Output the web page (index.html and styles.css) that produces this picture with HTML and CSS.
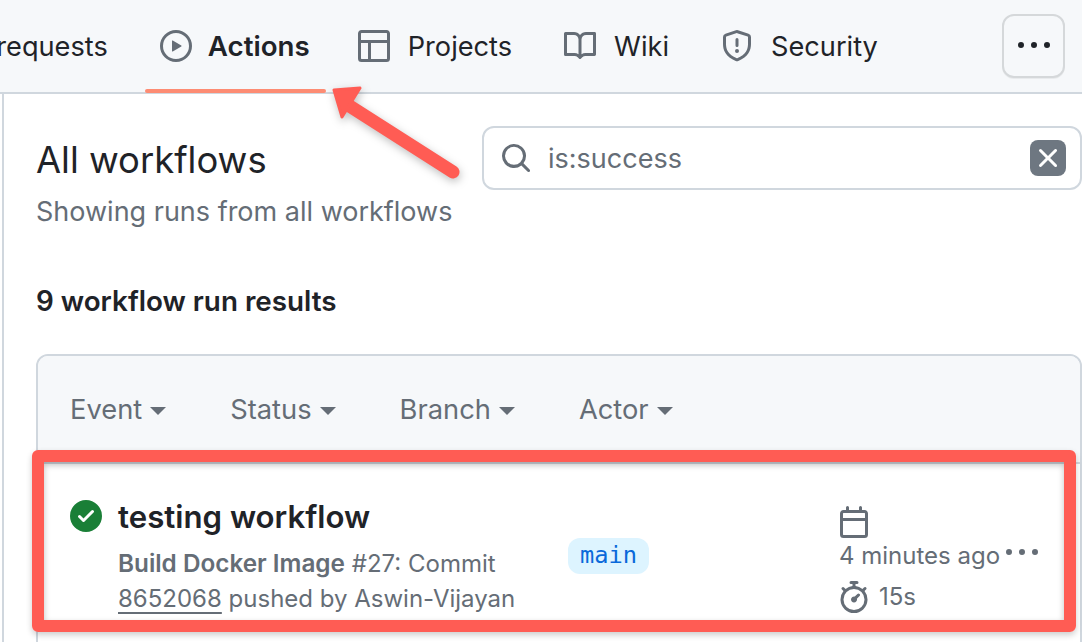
FILE: index.html
```html
<!DOCTYPE html>
<html lang="en">
<head>
    <meta charset="UTF-8">
    <title>Actions</title>
    <link rel="stylesheet" href="styles.css">
</head>
<body>
    <header class="repo-nav">
        <nav class="tabs">
            <a class="tab tab-first">Pull requests</a>
            <a class="tab active">
                <svg class="icon" viewBox="0 0 16 16"><path d="M8 0a8 8 0 1 1 0 16A8 8 0 0 1 8 0ZM1.5 8a6.5 6.5 0 1 0 13 0 6.5 6.5 0 0 0-13 0Zm4.879-2.773 4.264 2.559a.25.25 0 0 1 0 .428l-4.264 2.559A.25.25 0 0 1 6 10.559V5.442a.25.25 0 0 1 .379-.215Z"/></svg>
                Actions
            </a>
            <a class="tab">
                <svg class="icon" viewBox="0 0 16 16"><path d="M0 1.75C0 .784.784 0 1.75 0h12.5C15.216 0 16 .784 16 1.75v12.5A1.75 1.75 0 0 1 14.25 16H1.75A1.75 1.75 0 0 1 0 14.25ZM6.5 6.5v8h7.75a.25.25 0 0 0 .25-.25V6.5Zm8-1.5V1.75a.25.25 0 0 0-.25-.25H1.75a.25.25 0 0 0-.25.25V5Zm-13 1.5v7.75c0 .138.112.25.25.25H5v-8Z"/></svg>
                Projects
            </a>
            <a class="tab">
                <svg class="icon" viewBox="0 0 16 16"><path d="M0 1.75A.75.75 0 0 1 .75 1h4.253c1.227 0 2.317.59 3 1.501A3.743 3.743 0 0 1 11.006 1h4.245a.75.75 0 0 1 .75.75v10.5a.75.75 0 0 1-.75.75h-4.507a2.25 2.25 0 0 0-1.591.659l-.622.621a.75.75 0 0 1-1.06 0l-.622-.621A2.25 2.25 0 0 0 5.258 13H.75a.75.75 0 0 1-.75-.75Zm7.251 10.324.004-5.073-.002-2.253A2.25 2.25 0 0 0 5.003 2.5H1.5v9h3.757a3.75 3.75 0 0 1 1.994.574ZM8.755 4.75l-.004 7.322a3.752 3.752 0 0 1 1.992-.572H14.5v-9h-3.495a2.25 2.25 0 0 0-2.25 2.25Z"/></svg>
                Wiki
            </a>
            <a class="tab">
                <svg class="icon" viewBox="0 0 16 16"><path d="M7.467.133a1.748 1.748 0 0 1 1.066 0l5.25 1.68A1.75 1.75 0 0 1 15 3.48V7c0 1.566-.32 3.182-1.303 4.682-.983 1.498-2.585 2.813-5.032 3.855a1.697 1.697 0 0 1-1.33 0c-2.447-1.042-4.049-2.357-5.032-3.855C1.32 10.182 1 8.566 1 7V3.48a1.75 1.75 0 0 1 1.217-1.667Zm.61 1.429a.25.25 0 0 0-.153 0l-5.25 1.68a.25.25 0 0 0-.174.238V7c0 1.358.275 2.666 1.057 3.86.784 1.194 2.121 2.34 4.366 3.297a.196.196 0 0 0 .154 0c2.245-.956 3.582-2.104 4.366-3.298C13.225 9.666 13.5 8.36 13.5 7V3.48a.251.251 0 0 0-.174-.237l-5.25-1.68ZM8.75 4.75v3a.75.75 0 0 1-1.5 0v-3a.75.75 0 0 1 1.5 0ZM9 10.5a1 1 0 1 1-2 0 1 1 0 0 1 2 0Z"/></svg>
                Security
            </a>
        </nav>
        <button class="more-btn">
            <svg class="icon" viewBox="0 0 16 16"><path d="M8 9a1.5 1.5 0 1 0 0-3 1.5 1.5 0 0 0 0 3ZM1.5 9a1.5 1.5 0 1 0 0-3 1.5 1.5 0 0 0 0 3Zm13 0a1.5 1.5 0 1 0 0-3 1.5 1.5 0 0 0 0 3Z"/></svg>
        </button>
    </header>

    <main class="content">
        <div class="top">
            <div class="heading">
                <h1>All workflows</h1>
                <p>Showing runs from all workflows</p>
            </div>
            <div class="search">
                <svg class="icon" viewBox="0 0 16 16"><path d="M10.68 11.74a6 6 0 0 1-7.922-8.982 6 6 0 0 1 8.982 7.922l3.04 3.04a.749.749 0 0 1-.326 1.275.749.749 0 0 1-.734-.215ZM11.5 7a4.499 4.499 0 1 0-8.997 0A4.499 4.499 0 0 0 11.5 7Z"/></svg>
                <span class="query">is:success</span>
                <span class="clear">
                    <svg class="icon" viewBox="0 0 16 16"><path d="M3.72 3.72a.75.75 0 0 1 1.06 0L8 6.94l3.22-3.22a.749.749 0 0 1 1.275.326.749.749 0 0 1-.215.734L9.06 8l3.22 3.22a.749.749 0 0 1-.326 1.275.749.749 0 0 1-.734-.215L8 9.06l-3.22 3.22a.751.751 0 0 1-1.042-.018.751.751 0 0 1-.018-1.042L6.94 8 3.72 4.78a.75.75 0 0 1 0-1.06Z"/></svg>
                </span>
            </div>
        </div>

        <h2 class="results">9 workflow run results</h2>

        <section class="box">
            <div class="filters">
                <span class="filter">Event<i class="caret"></i></span>
                <span class="filter">Status<i class="caret"></i></span>
                <span class="filter">Branch<i class="caret"></i></span>
                <span class="filter">Actor<i class="caret"></i></span>
            </div>
            <div class="run">
                <svg class="icon status" viewBox="0 0 16 16"><path d="M8 16A8 8 0 1 1 8 0a8 8 0 0 1 0 16Zm3.78-9.72a.751.751 0 0 0-.018-1.042.751.751 0 0 0-1.042-.018L6.75 9.19 5.28 7.72a.751.751 0 0 0-1.042.018.751.751 0 0 0-.018 1.042l2 2a.75.75 0 0 0 1.06 0Z"/></svg>
                <div class="run-main">
                    <div class="run-title">testing workflow</div>
                    <div class="run-sub"><b>Build Docker Image</b> #27: Commit<br><u>8652068</u> pushed by Aswin-Vijayan</div>
                </div>
                <div class="branch-col"><span class="branch">main</span></div>
                <div class="run-meta">
                    <svg class="icon" viewBox="0 0 16 16"><path d="M4.75 0a.75.75 0 0 1 .75.75V2h5V.75a.75.75 0 0 1 1.5 0V2h1.25c.966 0 1.75.784 1.75 1.75v10.5A1.75 1.75 0 0 1 13.25 16H2.75A1.75 1.75 0 0 1 1 14.25V3.75C1 2.784 1.784 2 2.75 2H4V.75A.75.75 0 0 1 4.75 0ZM2.5 7.5v6.75c0 .138.112.25.25.25h10.5a.25.25 0 0 0 .25-.25V7.5Zm10.75-4H2.75a.25.25 0 0 0-.25.25V6h11V3.75a.25.25 0 0 0-.25-.25Z"/></svg>
                    <div class="ago">4 minutes ago</div>
                    <div class="duration">
                        <svg class="icon" viewBox="0 0 16 16"><path d="M5.75.75A.75.75 0 0 1 6.5 0h3a.75.75 0 0 1 0 1.5h-.75v1l-.001.041a6.724 6.724 0 0 1 3.464 1.435l.007-.006.75-.75a.749.749 0 0 1 1.275.326.749.749 0 0 1-.215.734l-.75.75-.006.007a6.75 6.75 0 1 1-10.548 0L2.72 5.03l-.75-.75a.751.751 0 0 1 .018-1.042.751.751 0 0 1 1.042-.018l.75.75.007.006A6.72 6.72 0 0 1 7.25 2.541V1.5H6.5a.75.75 0 0 1-.75-.75ZM8 14.5a5.25 5.25 0 1 0-.001-10.501A5.25 5.25 0 0 0 8 14.5Zm.389-6.7 1.33-1.33a.75.75 0 1 1 1.061 1.06L9.45 8.861A1.503 1.503 0 0 1 8 10.75a1.499 1.499 0 1 1 .389-2.95Z"/></svg>
                        15s
                    </div>
                </div>
                <svg class="icon run-more" viewBox="0 0 16 16"><path d="M8 9a1.5 1.5 0 1 0 0-3 1.5 1.5 0 0 0 0 3ZM1.5 9a1.5 1.5 0 1 0 0-3 1.5 1.5 0 0 0 0 3Zm13 0a1.5 1.5 0 1 0 0-3 1.5 1.5 0 0 0 0 3Z"/></svg>
            </div>
        </section>
    </main>

    <!-- annotations drawn on top of the screenshot -->
    <svg class="arrow" viewBox="0 0 1082 642">
        <path class="arrow-shaft" d="M348 105 L453 172"/>
        <path class="arrow-head" d="M334 90 L360 88 L342 117 Z"/>
    </svg>
    <div class="highlight"></div>
</body>
</html>
```

FILE: styles.css
```css
* {
    box-sizing: border-box;
}
body {
    margin: 0;
    width: 1082px;
    height: 642px;
    overflow: hidden;
    position: relative;
    background: #fff;
    color: #1f2328;
    font-family: Inter, "Liberation Sans", sans-serif;
}
.icon {
    display: block;
    width: 32px;
    height: 32px;
    flex: none;
    fill: #656d76;
}

/* repo nav */
.repo-nav {
    display: flex;
    align-items: center;
    justify-content: space-between;
    height: 94px;
    padding-right: 17px;
    background: #f6f8fa;
    border-bottom: 2px solid #d0d7de;
}
.tabs {
    display: flex;
    height: 92px;
    margin-left: -74px;
}
.tab {
    display: flex;
    align-items: center;
    gap: 18px;
    padding: 0 16px;
    margin-right: 20px;
    font-size: 27.2px;
    white-space: nowrap;
    position: relative;
}
.tab-first {
    margin-right: 21px;
}
.tab.active {
    gap: 16px;
    padding: 0 16px 0 15px;
    margin-right: 16px;
    font-size: 27.7px;
    font-weight: 600;
}
.tab.active::after {
    content: "";
    position: absolute;
    left: 0;
    right: 0;
    bottom: -1px;
    height: 4px;
    border-radius: 3px;
    background: #fd8c73;
}
.more-btn {
    display: flex;
    align-items: center;
    justify-content: center;
    width: 63px;
    height: 64px;
    padding: 0;
    background: #f6f8fa;
    border: 2px solid #d5d8da;
    border-radius: 12px;
    box-shadow: 0 1px 0 rgba(31, 35, 40, 0.06);
}
.more-btn .icon {
    fill: #1f2328;
}

/* content */
.content {
    margin-left: 2px;
    padding: 32px 0 0 32px;
    height: 548px;
    border-left: 2px solid #d0d7de;
}
.top {
    display: flex;
    justify-content: space-between;
}
.heading h1 {
    margin: 12px 0 0;
    font-size: 36.4px;
    line-height: 44px;
    font-weight: 400;
}
.heading p {
    margin: 14px 0 0;
    font-size: 27px;
    line-height: 32px;
    color: #656d76;
}
.search {
    display: flex;
    align-items: center;
    width: 600px;
    height: 64px;
    padding: 0 14px 0 16px;
    border: 2px solid #d0d7de;
    border-radius: 12px;
}
.query {
    flex: 1;
    margin-left: 16px;
    font-size: 27px;
    color: #656d76;
}
.clear {
    width: 36px;
    height: 36px;
    padding: 2px;
    border-radius: 8px;
    background: #6e7781;
}
.clear .icon {
    fill: #fff;
}
.results {
    margin: 57px 0 0;
    font-size: 27.8px;
    line-height: 32px;
    font-weight: 600;
}
.box {
    margin-top: 37px;
    border: 2px solid #d0d7de;
    border-radius: 12px;
    height: 300px;
    overflow: hidden;
}
.filters {
    display: flex;
    align-items: center;
    height: 108px;
    padding: 0 0 0 32px;
    background: #f6f8fa;
    border-bottom: 2px solid #d0d7de;
    color: #656d76;
    font-size: 27.3px;
}
.filter {
    display: flex;
    align-items: center;
    margin-right: 64px;
}
.caret {
    width: 0;
    height: 0;
    margin: 3px 0 0 8px;
    border: 8px solid transparent;
    border-top-color: #656d76;
    border-bottom-width: 0;
}
.run {
    display: flex;
    align-items: flex-start;
    padding: 36px 0 0 32px;
}
.status {
    fill: #1a7f37;
}
.run-main {
    width: 450px;
    margin: -1px 0 0 16px;
}
.run-title {
    font-size: 31.2px;
    line-height: 36px;
    font-weight: 600;
}
.run-sub {
    margin-top: 11px;
    font-size: 24px;
    line-height: 35px;
    color: #656d76;
}
.run-sub b {
    font-size: 24.3px;
    font-weight: 600;
}
.run-sub u {
    text-underline-offset: 5px;
}
.branch-col {
    width: 270px;
    padding-top: 38px;
}
.branch {
    display: inline-block;
    padding: 0 12px;
    height: 36px;
    line-height: 34px;
    border-radius: 12px;
    background: #ddf4ff;
    color: #0969da;
    font-family: "DejaVu Sans Mono", monospace;
    font-size: 23.7px;
}
.run-meta {
    width: 168px;
    margin-top: 6px;
    font-size: 24px;
    line-height: 32px;
    color: #656d76;
}
.ago {
    margin: 2px 0 0 1px;
    white-space: nowrap;
}
.duration {
    display: flex;
    align-items: center;
    gap: 9px;
    margin-top: 9px;
}
.run-more {
    margin-top: 37px;
}

/* annotations */
.arrow {
    position: absolute;
    left: 0;
    top: 0;
    width: 1082px;
    height: 642px;
    filter: drop-shadow(1px 3px 4px rgba(0, 0, 0, 0.25));
}
.arrow-shaft {
    fill: none;
    stroke: #ff5c54;
    stroke-width: 13;
    stroke-linecap: round;
}
.arrow-head {
    fill: #ff5c54;
    stroke: #ff5c54;
    stroke-width: 3;
    stroke-linejoin: round;
}
.highlight {
    position: absolute;
    left: 32px;
    top: 450px;
    width: 1044px;
    height: 182px;
    border: 12px solid #ff5c54;
    border-radius: 6px;
    box-shadow: 0 3px 6px rgba(0, 0, 0, 0.2), inset 0 3px 6px rgba(0, 0, 0, 0.25);
}
```
